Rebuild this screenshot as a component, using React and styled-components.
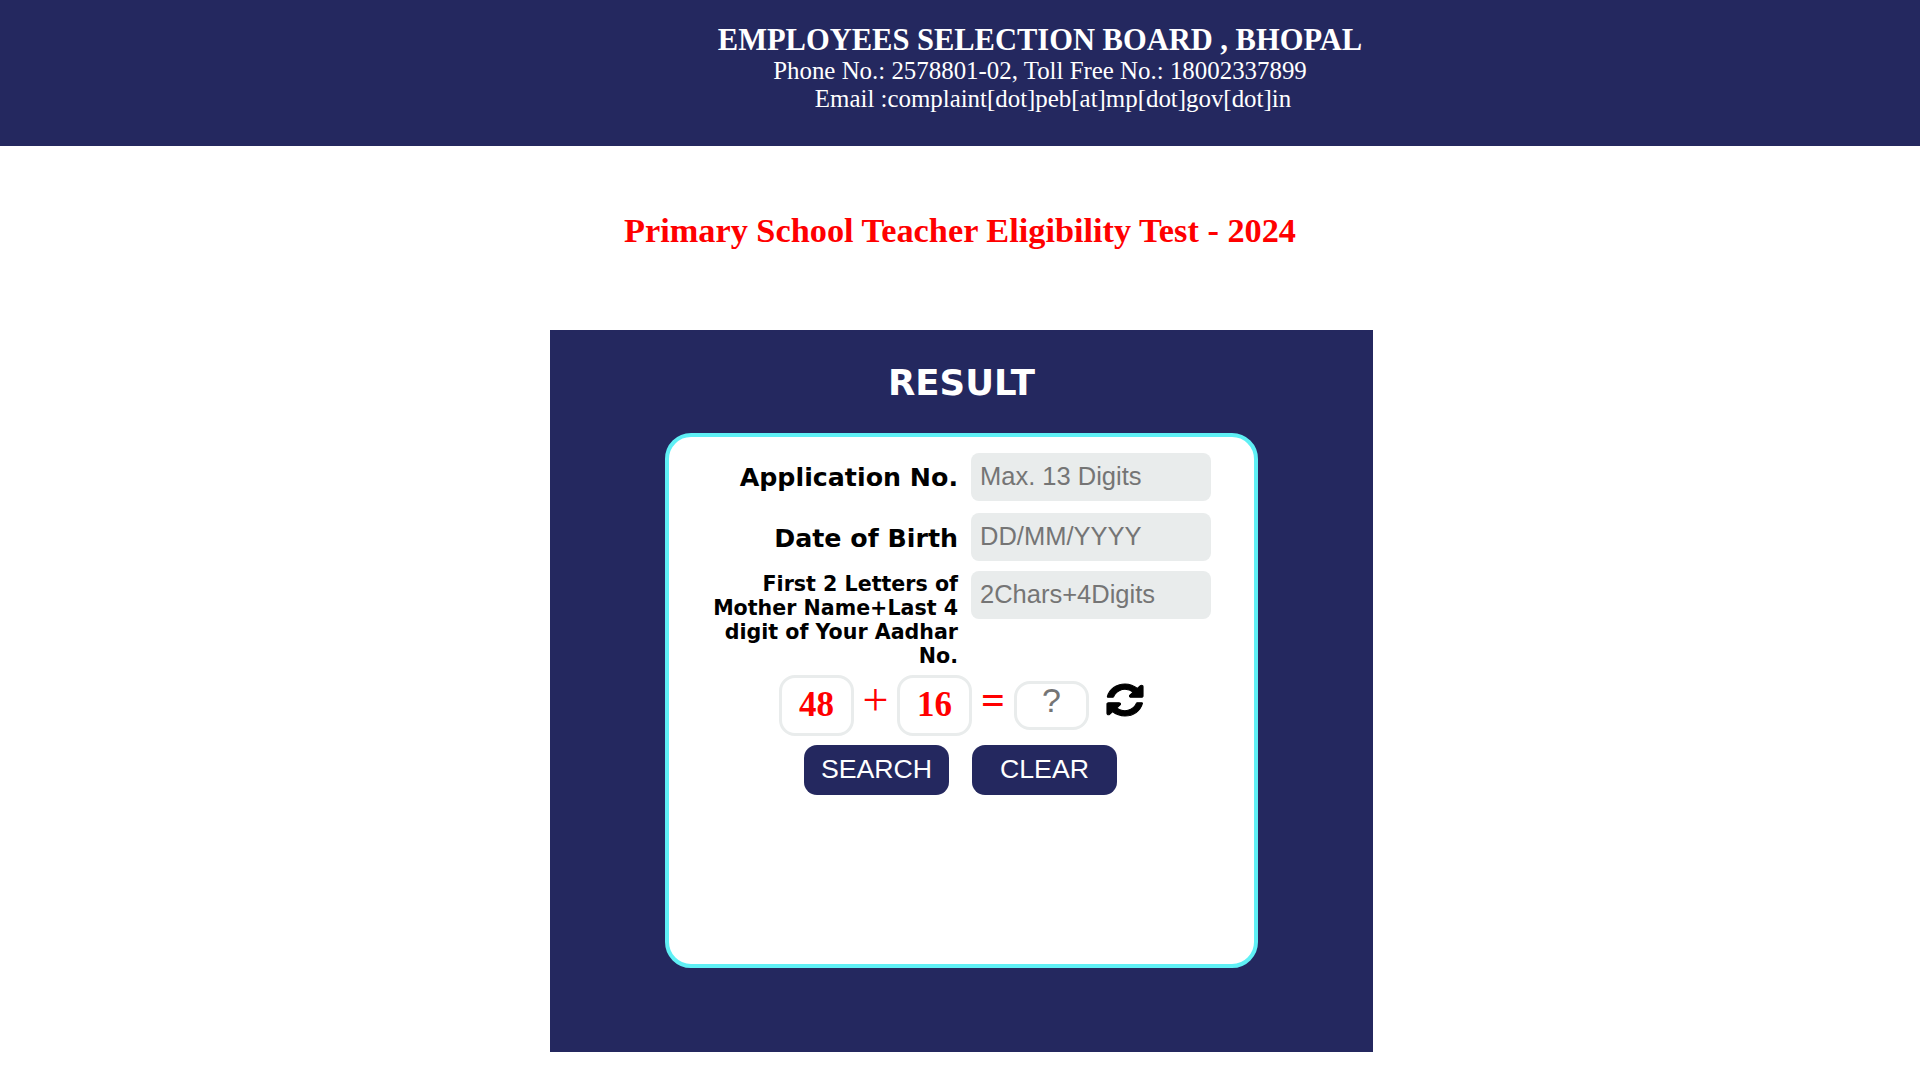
import React from 'react';
import styled, { createGlobalStyle } from 'styled-components';

const navy = '#24285f';

const GlobalStyle = createGlobalStyle`
  * { box-sizing: border-box; }
  html, body { margin: 0; padding: 0; background: #fff; }
  body { font-family: "Liberation Serif", serif; }
`
const Header = styled.header`
  height: 146px;
  padding: 24px 0 0 160px;
  background-color: ${navy};
  color: #fff;
  text-align: center;
`
const BoardName = styled.div`
  font-size: 30.5px;
  font-weight: bold;
  line-height: 33px;
`
const Contact = styled.div`
  font-size: 24.9px;
  line-height: 28px;
  padding-left: ${(p) => p.$indent || 0}px;
`
const Title = styled.h1`
  margin: 0;
  padding-top: 65px;
  height: 184px;
  font-size: 34.3px;
  line-height: 38px;
  font-weight: bold;
  color: #f00;
  text-align: center;
`
const Panel = styled.section`
  width: 823px;
  height: 722px;
  margin: 0 0 0 550px;
  padding-top: 33px;
  background-color: ${navy};
  display: flex;
  flex-direction: column;
  align-items: center;
`
const PanelTitle = styled.h2`
  margin: 0 0 30px;
  font-family: "DejaVu Sans", sans-serif;
  font-size: 35.5px;
  line-height: 40px;
  font-weight: bold;
  color: #fff;
`
const Card = styled.div`
  width: 593px;
  height: 535px;
  padding: 16px 0 0 31px;
  background-color: #fff;
  border: 4px solid #5ff0f5;
  border-radius: 26px;
`
const Row = styled.div`
  display: grid;
  grid-template-columns: 258px 240px;
  column-gap: 13px;
  align-items: start;
  margin-bottom: ${(p) => p.$gap}px;
`
const Label = styled.label`
  display: block;
  font-family: "DejaVu Sans", sans-serif;
  font-weight: bold;
  text-align: right;
  color: #000;
  font-size: 25.3px;
  line-height: 48px;
  padding-top: ${(p) => p.$top}px;
`
const SmallLabel = styled(Label)`
  font-size: 20.6px;
  line-height: 24px;
`
const Input = styled.input`
  width: 240px;
  height: 48px;
  padding: 0 9px 2px;
  border: none;
  border-radius: 8px;
  background-color: #e9ecec;
  font-family: "Liberation Sans", sans-serif;
  font-size: 25.5px;
  outline: none;
  &::placeholder { color: #757575; opacity: 1; }
`
const Captcha = styled.div`
  display: flex;
  align-items: flex-start;
  margin-left: 79px;
  margin-top: 7px;
`
const CaptchaBox = styled.div`
  width: 75px;
  height: 61px;
  padding-bottom: 2px;
  border: 3px solid #e9ecec;
  border-radius: 16px;
  font-size: 35px;
  font-weight: bold;
  color: #f00;
  display: flex;
  align-items: center;
  justify-content: center;
`
const Operator = styled.span`
  width: ${(p) => p.$width}px;
  text-align: center;
  font-size: ${(p) => (p.$bold ? 42 : 46)}px;
  font-weight: ${(p) => (p.$bold ? 'bold' : 'normal')};
  line-height: 50px;
  color: #f00;
`
const AnswerBox = styled.input`
  width: 75px;
  height: 49px;
  margin-top: 6px;
  padding: 0 0 10px;
  border: 3px solid #e9ecec;
  border-radius: 16px;
  text-align: center;
  font-family: "Liberation Sans", sans-serif;
  font-size: 34px;
  outline: none;
  &::placeholder { color: #757575; opacity: 1; }
`
const RefreshSvg = styled.svg`
  width: 36px;
  height: 32px;
  margin: 9px 0 0 18px;
  fill: #000;
  stroke: #000;
  stroke-width: 50;
  overflow: visible;
`

const RefreshIcon = () => (
  <RefreshSvg viewBox="128 128 1536 1536" preserveAspectRatio="none">
    <path d="M1639 1056q0 5-1 7-64 268-268 434.5t-478 166.5q-146 0-282.5-55t-243.5-157l-129 129q-19 19-45 19t-45-19-19-45v-448q0-26 19-45t45-19h448q26 0 45 19t19 45-19 45l-137 137q71 66 161 102t187 36q134 0 250-65t186-179q11-17 53-117 8-23 30-23h192q13 0 22.5 9.5t9.5 22.5zm25-800v448q0 26-19 45t-45 19h-448q-26 0-45-19t-19-45 19-45l138-138q-148-137-349-137-134 0-250 65t-186 179q-11 17-53 117-8 23-30 23h-199q-13 0-22.5-9.5t-9.5-22.5v-7q65-268 270-434.5t480-166.5q146 0 284 55.5t245 156.5l130-129q19-19 45-19t45 19 19 45z" />
  </RefreshSvg>
)

const Buttons = styled.div`
  display: flex;
  gap: 23px;
  margin: 9px 0 0 104px;
`
const Button = styled.button`
  width: 145px;
  height: 50px;
  padding: 0 0 1px;
  border: none;
  border-radius: 13px;
  background-color: ${navy};
  color: #fff;
  font-family: "Liberation Sans", sans-serif;
  font-size: 26.7px;
  cursor: pointer;
`

const App = () => {
  return (
    <>
      <GlobalStyle />
      <Header>
        <BoardName>EMPLOYEES SELECTION BOARD , BHOPAL</BoardName>
        <Contact>Phone No.: 2578801-02, Toll Free No.: 18002337899</Contact>
        <Contact $indent={26}>Email :complaint[dot]peb[at]mp[dot]gov[dot]in</Contact>
      </Header>
      <Title>Primary School Teacher Eligibility Test - 2024</Title>
      <Panel>
        <PanelTitle>RESULT</PanelTitle>
        <Card>
          <Row $gap={11}>
            <Label $top={1}>Application No.</Label>
            <Input placeholder="Max. 13 Digits" />
          </Row>
          <Row $gap={8}>
            <Label $top={2}>Date of Birth</Label>
            <Input placeholder="DD/MM/YYYY" />
          </Row>
          <Row $gap={0}>
            <SmallLabel $top={1}>First 2 Letters of Mother Name+Last 4 digit of Your Aadhar No.</SmallLabel>
            <Input placeholder="2Chars+4Digits" />
          </Row>
          <Captcha>
            <CaptchaBox>48</CaptchaBox>
            <Operator $width={43}>+</Operator>
            <CaptchaBox>16</CaptchaBox>
            <Operator $width={42} $bold>=</Operator>
            <AnswerBox placeholder="?" />
            <RefreshIcon />
          </Captcha>
          <Buttons>
            <Button>SEARCH</Button>
            <Button>CLEAR</Button>
          </Buttons>
        </Card>
      </Panel>
    </>
  )
}

export default App;
